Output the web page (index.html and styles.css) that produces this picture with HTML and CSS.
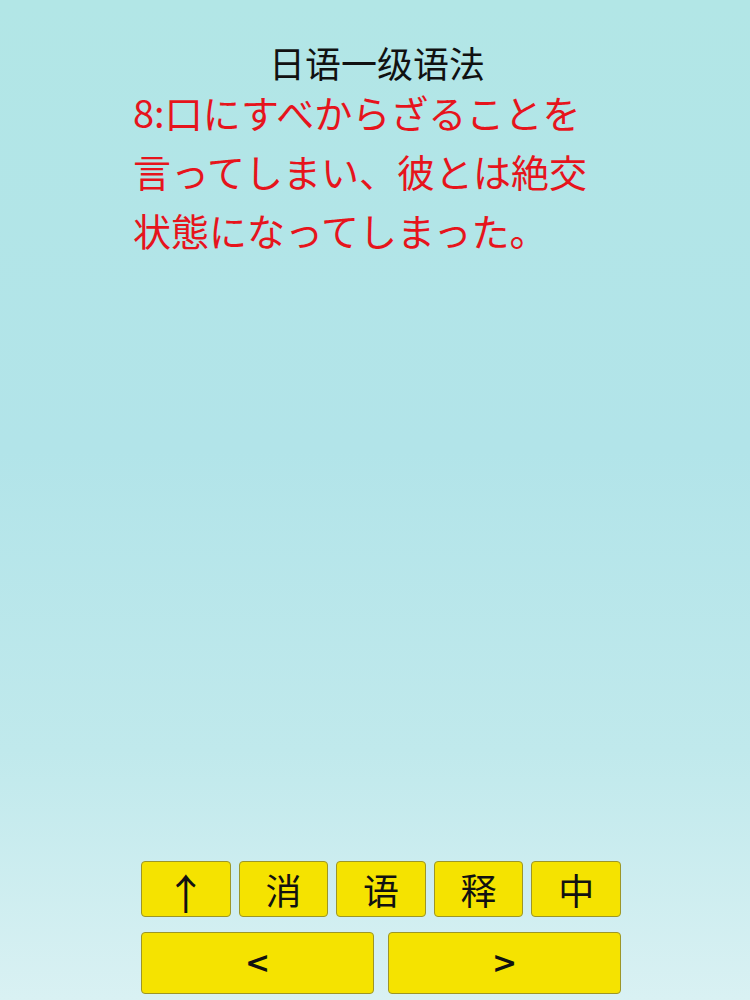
FILE: index.html
```html
<!doctype html>
<html>
<head>
<meta charset="utf-8">
<title>日语一级语法</title>
<link rel="stylesheet" href="styles.css">
</head>
<body>
<div class="page">
	<div class="title">日语一级语法</div>
	<div class="sentence">8:口にすべからざることを言ってしまい、彼とは絶交状態になってしまった。</div>

	<div class="keys">
		<div class="row five">
			<button class="key"><span class="arrow">↑</span></button>
			<button class="key">消</button>
			<button class="key">语</button>
			<button class="key">释</button>
			<button class="key">中</button>
		</div>
		<div class="row two">
			<button class="key nav">&lt;</button>
			<button class="key nav">&gt;</button>
		</div>
	</div>
</div>
</body>
</html>
```

FILE: styles.css
```css
body {
	margin: 0;
	font-family: "Noto Sans CJK SC", "Noto Sans", sans-serif;
	background: linear-gradient(180deg, #b2e6e6 0%, #b2e4e9 45%, #c0e9ec 75%, #d9f1f3 100%);
}

.page {
	height: 1000px;
	display: flex;
	flex-direction: column;
}

.title {
	font-size: 36px;
	line-height: 40px;
	color: #111;
	text-align: center;
	padding-top: 42px;
	margin-left: 4px;
}

.sentence {
	font-family: "Noto Sans CJK JP", "Noto Sans", sans-serif;
	font-size: 38px;
	line-height: 59px;
	color: #e6141c;
	width: 470px;
	margin-left: 133px;
	margin-top: 0;
	word-break: break-all;
}

.keys {
	margin-top: auto;
	margin-left: 141px;
	width: 480px;
	padding-bottom: 6px;
	display: flex;
	flex-direction: column;
	gap: 15px;
}

.row {
	display: grid;
}

.five {
	grid-template-columns: repeat(5, 1fr);
	gap: 8px;
	height: 56px;
}

.two {
	grid-template-columns: 1fr 1fr;
	gap: 14px;
	height: 62px;
}

.key {
	background: #f5e300;
	border: 1px solid #9c9628;
	border-radius: 4px;
	color: #111;
	font-family: "Noto Sans CJK SC", "Noto Sans", sans-serif;
	font-size: 36px;
	line-height: 1;
	padding: 0;
	cursor: pointer;
}

.arrow {
	display: inline-block;
	font-size: 42px;
	line-height: 42px;
	transform: translateY(3px);
}

.nav {
	font-family: "DejaVu Sans", sans-serif;
	font-size: 30px;
	font-weight: bold;
}
```
